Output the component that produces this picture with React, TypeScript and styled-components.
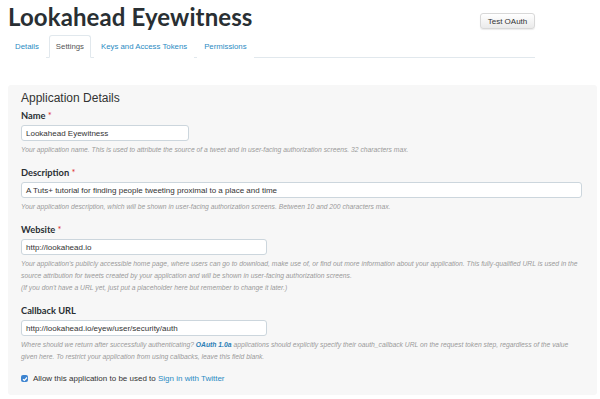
import React from "react";
import styled, { createGlobalStyle } from "styled-components";

const GlobalStyle = createGlobalStyle`
  html, body {
    margin: 0;
    padding: 0;
    background: #fff;
  }
  body {
    font-family: "Liberation Sans", Arial, sans-serif;
    color: #333;
  }
`;

const Page = styled.div`
  width: 600px;
  height: 399px;
  padding: 0 3px 0 8px;
  box-sizing: border-box;
  overflow: hidden;
`;

const Header = styled.div`
  width: 527px;
  display: flex;
  justify-content: space-between;
  align-items: flex-start;
`;

const Title = styled.h1`
  margin: 3px 0 0;
  font-family: "Lato", "Liberation Sans", sans-serif;
  font-weight: 700;
  font-size: 24px;
  line-height: 27px;
  color: #292f33;
  letter-spacing: 0.1px;
`;

const Button = styled.button`
  margin-top: 13px;
  width: 55px;
  height: 16px;
  padding: 0;
  border: 1px solid #d8d8d8;
  border-radius: 3px;
  background: linear-gradient(#fff, #eaeaea);
  font-family: "Liberation Sans", Arial, sans-serif;
  font-size: 8px;
  color: #333;
  box-shadow: 0 1px 1px rgba(0, 0, 0, 0.08);
`;

const Tabs = styled.ul`
  list-style: none;
  margin: 5px 0 0;
  padding: 0;
  width: 527px;
  box-sizing: border-box;
  display: flex;
  border-bottom: 1px solid #e1e8ed;
`;

const Tab = styled.li<{ $active?: boolean }>`
  height: 21px;
  padding: 0 6px;
  margin-bottom: -1px;
  display: flex;
  align-items: center;
  font-size: 7.8px;
  color: ${(p) => (p.$active ? "#555" : "#2a8bc3")};
  background: #fff;
  border: 1px solid ${(p) => (p.$active ? "#e1e8ed" : "transparent")};
  border-bottom-color: ${(p) => (p.$active ? "#fff" : "transparent")};
  border-radius: 3px 3px 0 0;
  & + & {
    margin-left: 3px;
  }
`;

const Panel = styled.div`
  margin-top: 27px;
  width: 589px;
  height: 310px;
  background: #f7f7f7;
  border-radius: 3px;
  padding: 6px 13px 0;
  box-sizing: border-box;
`;

const Heading = styled.h2`
  margin: 0 0 5px;
  font-family: "Liberation Sans", Arial, sans-serif;
  font-weight: 400;
  font-size: 12px;
  line-height: 14px;
  color: #333;
`;

const Field = styled.div`
  margin-bottom: 11px;
`;

const Label = styled.div`
  font-family: "Lato", "Liberation Sans", sans-serif;
  font-weight: 700;
  font-size: 9.3px;
  line-height: 12px;
  color: #292f33;
  margin-bottom: 3px;
  span {
    color: #d33;
    font-weight: 400;
  }
`;

const Input = styled.div<{ $width: number }>`
  width: ${(p) => p.$width}px;
  height: 16px;
  box-sizing: border-box;
  background: #fff;
  border: 1px solid #ccd6dd;
  border-radius: 3px;
  padding: 0 4px;
  display: flex;
  align-items: center;
  font-size: 8px;
  color: #333;
  white-space: nowrap;
`;

const Help = styled.p`
  margin: 3px 0 0;
  font-size: 6.75px;
  line-height: 12px;
  font-style: italic;
  color: #9a9a9a;
  a {
    color: #2a7db5;
    font-weight: 700;
    text-decoration: none;
  }
`;

const CheckRow = styled.label`
  display: flex;
  align-items: center;
  gap: 5px;
  font-size: 8px;
  color: #333;
  margin-top: 3px;
  a {
    color: #2a8bc3;
    text-decoration: none;
  }
`;

const Box = styled.span`
  width: 7px;
  height: 7px;
  border-radius: 2px;
  background: #3d84d0;
  display: flex;
  align-items: center;
  justify-content: center;
`;

export default function App() {
  return (
    <Page>
      <GlobalStyle />
      <Header>
        <Title>Lookahead Eyewitness</Title>
        <Button>Test OAuth</Button>
      </Header>
      <Tabs>
        <Tab>Details</Tab>
        <Tab $active>Settings</Tab>
        <Tab>Keys and Access Tokens</Tab>
        <Tab>Permissions</Tab>
      </Tabs>
      <Panel>
        <Heading>Application Details</Heading>
        <Field>
          <Label>
            Name <span>*</span>
          </Label>
          <Input $width={168}>Lookahead Eyewitness</Input>
          <Help>
            Your application name. This is used to attribute the source of a tweet and in user-facing
            authorization screens. 32 characters max.
          </Help>
        </Field>
        <Field>
          <Label>
            Description <span>*</span>
          </Label>
          <Input $width={561}>A Tuts+ tutorial for finding people tweeting proximal to a place and time</Input>
          <Help>
            Your application description, which will be shown in user-facing authorization screens.
            Between 10 and 200 characters max.
          </Help>
        </Field>
        <Field>
          <Label>
            Website <span>*</span>
          </Label>
          <Input $width={246}>http://lookahead.io</Input>
          <Help>
            Your application's publicly accessible home page, where users can go to download, make use
            of, or find out more information about your application. This fully-qualified URL is used in
            the source attribution for tweets created by your application and will be shown in
            user-facing authorization screens.
            <br />
            (If you don't have a URL yet, just put a placeholder here but remember to change it later.)
          </Help>
        </Field>
        <Field>
          <Label>Callback URL</Label>
          <Input $width={246}>http://lookahead.io/eyew/user/security/auth</Input>
          <Help>
            Where should we return after successfully authenticating? <a href="#">OAuth 1.0a</a>{" "}
            applications should explicitly specify their oauth_callback URL on the request token step,
            regardless of the value given here. To restrict your application from using callbacks,
            leave this field blank.
          </Help>
        </Field>
        <CheckRow>
          <Box>
            <svg width="6" height="6" viewBox="0 0 6 6">
              <path d="M1 3.2 L2.4 4.5 L5 1.5" stroke="#fff" strokeWidth="1.2" fill="none" />
            </svg>
          </Box>
          <span>
            Allow this application to be used to <a href="#">Sign in with Twitter</a>
          </span>
        </CheckRow>
      </Panel>
    </Page>
  );
}
